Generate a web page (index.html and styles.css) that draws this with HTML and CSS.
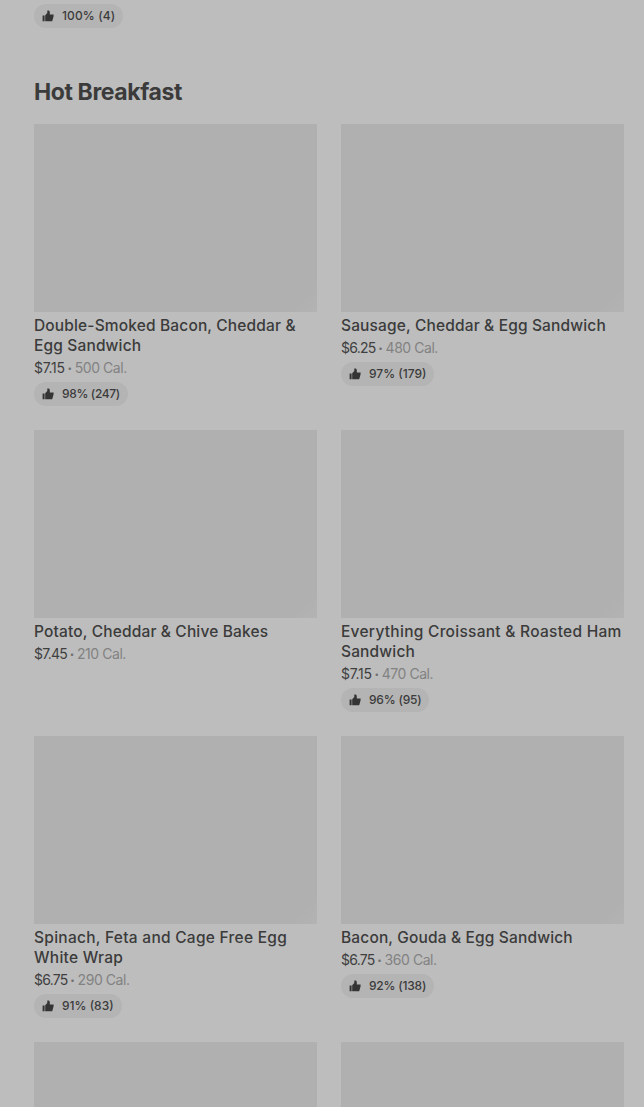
FILE: index.html
```html
<!DOCTYPE html>
<html lang="en">
<head>
<meta charset="utf-8">
<title>Hot Breakfast</title>
<link rel="stylesheet" href="styles.css">
</head>
<body>
<svg class="sprite" aria-hidden="true"><symbol id="thumb" viewBox="0 0 12 12"><path d="M.6 5.6h2v5.7h-2zM3.2 5.2 5.3 3.1V.6h.8c1 0 1.7.7 1.7 1.7v2.3h3.8v1.7l-1.4 5h-7z"/></symbol></svg>
<main class="menu">
  <div class="previous"><span class="rating"><svg class="thumb"><use href="#thumb"/></svg><span>100% (4)</span></span></div>
  <h2 class="heading">Hot Breakfast</h2>
  <div class="grid">
    <article class="item"><div class="photo"></div><h3 class="name">Double-Smoked Bacon, Cheddar &amp;<br>Egg Sandwich</h3><p class="meta"><span class="price seven">$7.15</span><span class="dot">•</span><span>500 Cal.</span></p><span class="rating condensed"><svg class="thumb"><use href="#thumb"/></svg><span>98% (247)</span></span></article>
    <article class="item"><div class="photo"></div><h3 class="name">Sausage, Cheddar &amp; Egg Sandwich</h3><p class="meta"><span class="price">$6.25</span><span class="dot">•</span><span>480 Cal.</span></p><span class="rating"><svg class="thumb"><use href="#thumb"/></svg><span>97% (179)</span></span></article>
    <article class="item"><div class="photo"></div><h3 class="name">Potato, Cheddar &amp; Chive Bakes</h3><p class="meta"><span class="price">$7.45</span><span class="dot">•</span><span>210 Cal.</span></p></article>
    <article class="item"><div class="photo"></div><h3 class="name"><span class="wide">Everything Croissant &amp; Roasted Ham</span><br>Sandwich</h3><p class="meta"><span class="price seven">$7.15</span><span class="dot">•</span><span>470 Cal.</span></p><span class="rating snug"><svg class="thumb"><use href="#thumb"/></svg><span>96% (95)</span></span></article>
    <article class="item"><div class="photo"></div><h3 class="name wide">Spinach, Feta and Cage Free Egg<br>White Wrap</h3><p class="meta"><span class="price">$6.75</span><span class="dot">•</span><span>290 Cal.</span></p><span class="rating"><svg class="thumb"><use href="#thumb"/></svg><span>91% (83)</span></span></article>
    <article class="item"><div class="photo"></div><h3 class="name">Bacon, Gouda &amp; Egg Sandwich</h3><p class="meta"><span class="price">$6.75</span><span class="dot">•</span><span>360 Cal.</span></p><span class="rating snug"><svg class="thumb"><use href="#thumb"/></svg><span>92% (138)</span></span></article>
    <article class="item"><div class="photo"></div></article>
    <article class="item"><div class="photo"></div></article>
  </div>
</main>
</body>
</html>
```

FILE: styles.css
```css
* { box-sizing: border-box; }
body { margin: 0; background: #bdbdbd; color: #3b3b3b; font-family: Inter, "Liberation Sans", sans-serif; }
.sprite { display: none; }
.menu { padding: 4px 20px 0 34px; }
.previous { height: 72px; }
.heading { margin: 0 0 16px; font-size: 23px; line-height: 32px; font-weight: 650; letter-spacing: -0.4px; white-space: nowrap; }
.grid { display: grid; grid-template-columns: 283px 283px; grid-template-rows: repeat(3, 306px) 65px; column-gap: 24px; }
.item { display: flex; flex-direction: column; align-items: flex-start; min-height: 0; }
.photo { flex: 0 0 188px; width: 100%; background: linear-gradient(135deg, #b0b0b0 94%, #b3b3b3); }
.item:nth-last-child(-n+2) .photo { flex-basis: 65px; background: #b0b0b0; }
.name { margin: 4px 0 2px; font-size: 15.5px; line-height: 20px; font-weight: 500; letter-spacing: 0.15px; white-space: nowrap; }
.wide { letter-spacing: 0.27px; }
.meta { display: flex; margin: 0; height: 20px; font-size: 14px; line-height: 20px; letter-spacing: -0.45px; color: #828282; white-space: nowrap; }
.price { color: #3f3f3f; letter-spacing: -0.75px; }
.seven { letter-spacing: -0.3px; }
.dot { width: 10px; text-align: center; font-size: 8px; letter-spacing: 0; color: #707070; }
.rating { display: inline-flex; align-items: center; gap: 8px; height: 24px; margin-top: 4px; padding: 0 8px; border-radius: 12px; background: #b4b4b4; font-size: 12px; line-height: 24px; font-weight: 500; white-space: nowrap; }
.previous .rating { margin-top: 0; letter-spacing: 0.12px; }
.snug { letter-spacing: -0.2px; }
.condensed { letter-spacing: -0.35px; }
.thumb { width: 12px; height: 12px; fill: #343434; }
```
